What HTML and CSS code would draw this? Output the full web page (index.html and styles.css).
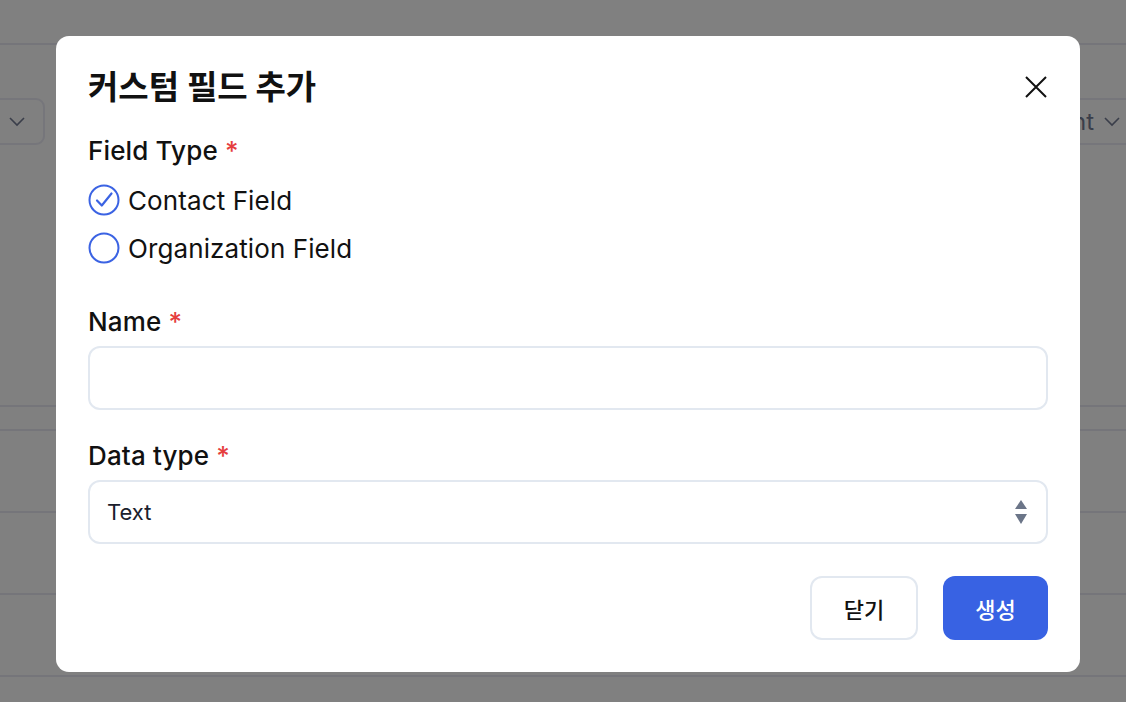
FILE: index.html
```html
<!DOCTYPE html>
<html lang="ko">
<head>
<meta charset="utf-8">
<title>커스텀 필드 추가</title>
<link rel="stylesheet" href="styles.css">
</head>
<body>
<div class="page">
  <div class="topbar"></div>
  <div class="toolbar">
    <div class="tbox tbox-left">
      <svg class="chev" viewBox="0 0 16 10" width="16" height="10"><path d="M1 1l7 7 7-7" fill="none" stroke="currentColor" stroke-width="1.6"/></svg>
    </div>
    <div class="tbox tbox-right">
      <span class="tlabel">nt</span>
      <svg class="chev" viewBox="0 0 16 10" width="16" height="10"><path d="M1 1l7 7 7-7" fill="none" stroke="currentColor" stroke-width="1.6"/></svg>
    </div>
  </div>
  <div class="table">
    <div class="trow r1"></div>
    <div class="trow r2"></div>
    <div class="trow r3"></div>
    <div class="trow r4"></div>
    <div class="trow r5"></div>
  </div>
</div>

<div class="overlay">
  <div class="modal">
    <div class="modal-head">
      <h2 class="title">커스텀 필드 추가</h2>
      <button class="close" aria-label="닫기">
        <svg viewBox="0 0 22 22" width="22" height="22"><path d="M1 1L21 21M21 1L1 21" stroke="#111" stroke-width="2" fill="none"/></svg>
      </button>
    </div>

    <div class="label label-first">Field Type <span class="req">*</span></div>
    <div class="radios">
      <label class="radio">
        <span class="dot checked">
          <svg viewBox="0 0 32 32" width="32" height="32"><circle cx="16" cy="16" r="14.5" fill="none" stroke="#3b63e3" stroke-width="2"/><path d="M9 16.5L13.8 21.5L23.5 9.5" fill="none" stroke="#3b63e3" stroke-width="2.2" stroke-linecap="round" stroke-linejoin="round"/></svg>
        </span>
        <span>Contact Field</span>
      </label>
      <label class="radio">
        <span class="dot">
          <svg viewBox="0 0 32 32" width="32" height="32"><circle cx="16" cy="16" r="14.5" fill="none" stroke="#3b63e3" stroke-width="2"/></svg>
        </span>
        <span>Organization Field</span>
      </label>
    </div>

    <div class="label label-name">Name <span class="req">*</span></div>
    <div class="field"></div>

    <div class="label label-type">Data type <span class="req">*</span></div>
    <div class="field select">
      <span class="select-value">Text</span>
      <svg class="arrows" viewBox="0 0 12 24" width="12" height="24"><path d="M6 0L12 9H0Z" fill="#6b7588"/><path d="M0 14H12L6 24Z" fill="#6b7588"/></svg>
    </div>

    <div class="footer">
      <button class="btn btn-ghost">닫기</button>
      <button class="btn btn-primary">생성</button>
    </div>
  </div>
</div>
</body>
</html>
```

FILE: styles.css
```css
* { box-sizing: border-box; }

html, body {
  margin: 0;
  padding: 0;
  width: 1126px;
  height: 702px;
  overflow: hidden;
  background: #808080;
  font-family: Inter, "Noto Sans CJK KR", sans-serif;
}

.page {
  width: 1126px;
  height: 702px;
  overflow: hidden;
}

.topbar {
  height: 45px;
  border-bottom: 2px solid #75757a;
}

.toolbar {
  margin-top: 53px;
  height: 47px;
  display: flex;
  justify-content: space-between;
}

.tbox {
  height: 47px;
  border: 2px solid #76767b;
  display: flex;
  align-items: center;
  color: #3a3e4a;
}

.tbox-left {
  width: 66px;
  margin-left: -21px;
  border-radius: 9px;
  justify-content: flex-end;
  padding-right: 18px;
}

.tbox-right {
  width: 260px;
  margin-right: -40px;
  border-radius: 9px;
  justify-content: flex-end;
  padding-right: 44px;
  gap: 10px;
}

.tlabel {
  font-size: 24px;
  color: #3a3e4a;
}

.table {
  margin-top: 260px;
}

.trow {
  border-top: 2px solid #75757a;
}
.r1 { height: 24px; }
.r2 { height: 82px; }
.r3 { height: 82px; }
.r4 { height: 82px; }
.r5 { height: 30px; }

.overlay {
  position: fixed;
  inset: 0;
}

.modal {
  position: absolute;
  left: 56px;
  top: 36px;
  width: 1024px;
  height: 636px;
  background: #fff;
  border-radius: 13px;
  padding: 32px;
  display: flex;
  flex-direction: column;
}

.modal-head {
  display: flex;
  justify-content: space-between;
  align-items: center;
  height: 38px;
}

.title {
  margin: 0;
  font-size: 33px;
  line-height: 38px;
  font-weight: 700;
  color: #111;
}

.close {
  border: 0;
  background: none;
  padding: 0;
  width: 22px;
  height: 22px;
  margin-right: 1px;
  display: flex;
}

.label {
  font-size: 26px;
  line-height: 32px;
  font-weight: 500;
  color: #111;
  letter-spacing: 0.15px;
}

.req {
  color: #e53e3e;
}

.label-first { margin-top: 29px; }
.label-name { margin-top: 34px; }
.label-type { margin-top: 30px; }

.radios {
  margin-top: 9px;
  display: flex;
  flex-direction: column;
}

.radio {
  height: 48px;
  display: flex;
  align-items: center;
  gap: 8px;
  font-size: 26px;
  color: #111;
  letter-spacing: 0.1px;
}

.dot {
  width: 32px;
  height: 32px;
  display: flex;
}

.field {
  margin-top: 8px;
  height: 64px;
  border: 2px solid #e2e8f0;
  border-radius: 12px;
}

.select {
  display: flex;
  align-items: center;
  justify-content: space-between;
  padding: 0 19px 0 17px;
}

.select-value {
  font-size: 22px;
  color: #1a202c;
}

.arrows {
  display: block;
}

.footer {
  margin-top: 32px;
  display: flex;
  justify-content: flex-end;
  gap: 25px;
}

.btn {
  height: 64px;
  border-radius: 12px;
  font-family: Inter, "Noto Sans CJK KR", sans-serif;
  font-size: 22px;
  font-weight: 500;
  padding: 0;
}

.btn-ghost {
  width: 108px;
  background: #fff;
  border: 2px solid #e2e8f0;
  color: #111;
}

.btn-primary {
  width: 105px;
  background: #3862e3;
  border: 0;
  color: #fff;
}
```
